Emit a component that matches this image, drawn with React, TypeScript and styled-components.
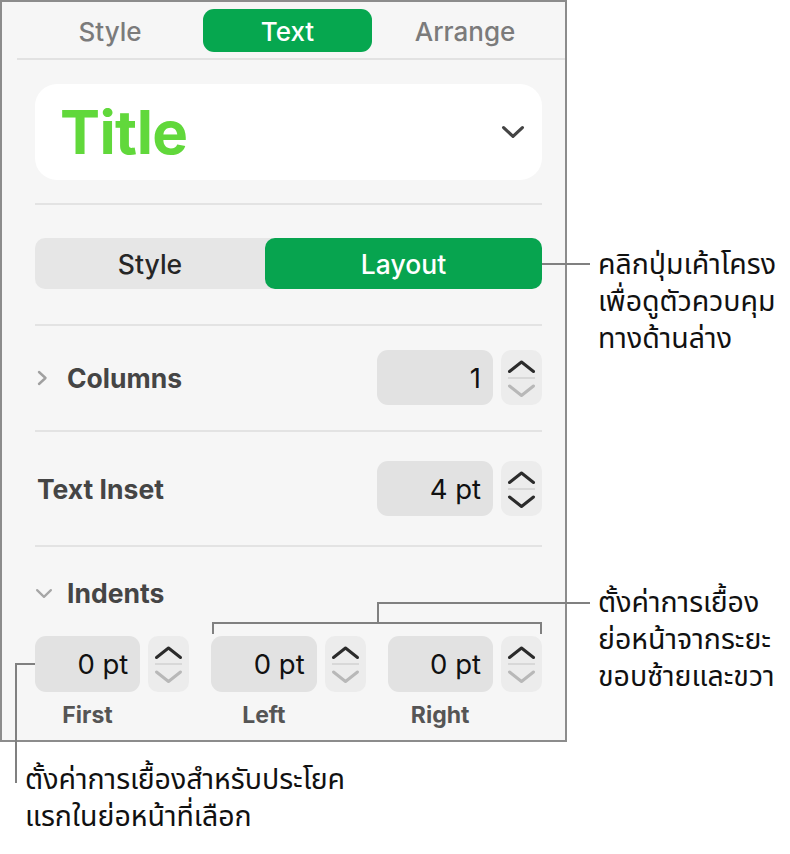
import React from "react";
import styled, { createGlobalStyle } from "styled-components";

const Global = createGlobalStyle`
  html, body { margin: 0; padding: 0; background: #ffffff; }
  body { font-family: Inter, "Noto Sans", "Noto Sans Thai", sans-serif; color: #1d1d1d; }
  * { box-sizing: border-box; }
`;

const Page = styled.div`
  position: relative;
  width: 790px;
  height: 854px;
  background: #ffffff;
`;

const Panel = styled.div`
  width: 567px;
  background: #f6f6f6;
  border: 2px solid #8c8c8c;
  padding-bottom: 13px;
`;

const TabBar = styled.div`
  display: flex;
  gap: 8.5px;
  margin-left: 15px;
  padding: 7px 0 6px 8.5px;
  border-bottom: 2px solid #e2e2e2;
`;

const Tab = styled.div<{ $active?: boolean }>`
  width: 169px;
  height: 43px;
  border-radius: 11px;
  display: flex;
  align-items: center;
  justify-content: center;
  padding-top: 2px;
  font-size: 26px;
  font-weight: 500;
  color: ${(p) => (p.$active ? "#ffffff" : "#7b7b7b")};
  background: ${(p) => (p.$active ? "#06a74f" : "transparent")};
`;

const Content = styled.div`
  padding: 0 23px 0 33px;
`;

const TitleBox = styled.div`
  margin-top: 24px;
  height: 96px;
  border-radius: 22px;
  background: #ffffff;
  display: flex;
  align-items: center;
  justify-content: space-between;
  padding: 0 17px 0 25px;
`;

const TitleText = styled.span`
  font-size: 60px;
  font-weight: 700;
  color: #61d83b;
  letter-spacing: -0.6px;
  line-height: 1;
`;

const Divider = styled.div<{ $mt: number }>`
  height: 2px;
  background: #e3e3e3;
  margin-top: ${(p) => p.$mt}px;
`;

const Segmented = styled.div`
  margin-top: 33px;
  height: 51px;
  display: grid;
  grid-template-columns: 230px 1fr;
  background: #e6e6e6;
  border-radius: 10px;
`;

const Segment = styled.div<{ $active?: boolean }>`
  display: flex;
  align-items: center;
  justify-content: center;
  font-size: 26.5px;
  font-weight: 500;
  border-radius: 10px;
  color: ${(p) => (p.$active ? "#ffffff" : "#262626")};
  background: ${(p) => (p.$active ? "#07a44f" : "transparent")};
`;

const Row = styled.div<{ $mt: number }>`
  margin-top: ${(p) => p.$mt}px;
  height: 55px;
  display: flex;
  align-items: center;
  justify-content: space-between;
`;

const RowLabel = styled.div<{ $indent?: number }>`
  display: flex;
  align-items: center;
  padding-left: ${(p) => p.$indent ?? 0}px;
  font-size: 26.5px;
  font-weight: 700;
  color: #454545;
`;

const Disclosure = styled.span<{ $pad?: number }>`
  width: 32px;
  display: flex;
  align-items: center;
  padding-left: ${(p) => p.$pad ?? 0}px;
`;

const Control = styled.div`
  display: flex;
  gap: 8px;
  height: 100%;
`;

const Field = styled.div<{ $w?: number }>`
  width: ${(p) => (p.$w ? `${p.$w}px` : "auto")};
  flex: ${(p) => (p.$w ? "none" : "1")};
  height: 100%;
  border-radius: 11px;
  background: #e2e2e2;
  display: flex;
  align-items: center;
  justify-content: flex-end;
  padding-right: 12px;
  font-size: 27.5px;
  color: #111111;
`;

const StepperBox = styled.div`
  width: 41px;
  height: 100%;
  border-radius: 10px;
  background: #ececec;
  flex: none;
  display: flex;
  flex-direction: column;
  align-items: center;
`;

const IndentsHeader = styled.div`
  margin-top: 31px;
  height: 30px;
  display: flex;
  align-items: center;
  font-size: 26.5px;
  font-weight: 700;
  color: #454545;
`;

const IndentGrid = styled.div`
  margin-top: 28px;
  display: grid;
  grid-template-columns: repeat(3, 1fr);
  column-gap: 22px;
`;

const IndentGroup = styled.div`
  display: flex;
  flex-direction: column;
`;

const IndentControl = styled.div`
  display: flex;
  gap: 8px;
  height: 56px;
`;

const IndentLabel = styled.div`
  margin-top: 11px;
  width: 105px;
  text-align: center;
  line-height: 24px;
  font-size: 23px;
  font-weight: 700;
  color: #555555;
`;

const Leaders = styled.svg`
  position: absolute;
  left: 0;
  top: 0;
  pointer-events: none;
`;

const Callout = styled.div<{ $x: number; $y: number }>`
  position: absolute;
  left: ${(p) => p.$x}px;
  top: ${(p) => p.$y}px;
  font-size: 28.5px;
  line-height: 37px;
  color: #111111;
  white-space: nowrap;
`;

function Stepper({ downDisabled = true }: { downDisabled?: boolean }) {
  return (
    <StepperBox>
      <svg width="41" height="55" viewBox="0 0 41 55">
        <path d="M8.5 21.5 L20.5 12 L32.5 21.5" fill="none" stroke="#2b2b2b" strokeWidth="3" strokeLinecap="round" strokeLinejoin="round" />
        <line x1="7" y1="28" x2="34" y2="28" stroke="#d2d2d2" strokeWidth="1.5" />
        <path d="M8.5 36 L20.5 45.5 L32.5 36" fill="none" stroke={downDisabled ? "#b8b8b8" : "#2b2b2b"} strokeWidth="3" strokeLinecap="round" strokeLinejoin="round" />
      </svg>
    </StepperBox>
  );
}

const ChevronDown = ({ w, h, color, sw }: { w: number; h: number; color: string; sw: number }) => (
  <svg width={w} height={h} viewBox={`0 0 ${w} ${h}`}>
    <path d={`M${sw / 2 + 1} ${sw / 2 + 1} L${w / 2} ${h - sw / 2 - 1} L${w - sw / 2 - 1} ${sw / 2 + 1}`} fill="none" stroke={color} strokeWidth={sw} strokeLinecap="round" strokeLinejoin="round" />
  </svg>
);

const ChevronRight = () => (
  <svg width="12" height="16" viewBox="0 0 12 16">
    <path d="M3 2 L9.5 8 L3 14" fill="none" stroke="#a0a0a0" strokeWidth="2.4" strokeLinecap="round" strokeLinejoin="round" />
  </svg>
);

export default function App() {
  return (
    <Page>
      <Global />
      <Panel>
        <TabBar>
          <Tab>Style</Tab>
          <Tab $active>Text</Tab>
          <Tab>Arrange</Tab>
        </TabBar>
        <Content>
          <TitleBox>
            <TitleText>Title</TitleText>
            <ChevronDown w={24} h={14} color="#444444" sw={3.2} />
          </TitleBox>
          <Divider $mt={23} />
          <Segmented>
            <Segment>Style</Segment>
            <Segment $active>Layout</Segment>
          </Segmented>
          <Divider $mt={35} />
          <Row $mt={24}>
            <RowLabel>
              <Disclosure $pad={1}>
                <ChevronRight />
              </Disclosure>
              Columns
            </RowLabel>
            <Control>
              <Field $w={116}>1</Field>
              <Stepper />
            </Control>
          </Row>
          <Divider $mt={25} />
          <Row $mt={29}>
            <RowLabel $indent={2}>Text Inset</RowLabel>
            <Control>
              <Field $w={116}>4 pt</Field>
              <Stepper downDisabled={false} />
            </Control>
          </Row>
          <Divider $mt={29} />
          <IndentsHeader>
            <Disclosure>
              <ChevronDown w={18} h={11} color="#a6a6a6" sw={2.2} />
            </Disclosure>
            Indents
          </IndentsHeader>
          <IndentGrid>
            {["First", "Left", "Right"].map((l) => (
              <IndentGroup key={l}>
                <IndentControl>
                  <Field>0 pt</Field>
                  <Stepper />
                </IndentControl>
                <IndentLabel>{l}</IndentLabel>
              </IndentGroup>
            ))}
          </IndentGrid>
        </Content>
      </Panel>

      <Leaders width="790" height="854" viewBox="0 0 790 854">
        <g fill="none" stroke="#808080" strokeWidth="2">
          <path d="M542 264 H590" />
          <path d="M213 634 V623 H541 V634" />
          <path d="M378 623 V603 H590" />
          <path d="M35 664 H16 V783" />
        </g>
      </Leaders>

      <Callout $x={598} $y={245}>
        คลิกปุ่มเค้าโครง
        <br />
        เพื่อดูตัวควบคุม
        <br />
        ทางด้านล่าง
      </Callout>
      <Callout $x={598} $y={583}>
        ตั้งค่าการเยื้อง
        <br />
        ย่อหน้าจากระยะ
        <br />
        ขอบซ้ายและขวา
      </Callout>
      <Callout $x={25} $y={760}>
        ตั้งค่าการเยื้องสำหรับประโยค
        <br />
        แรกในย่อหน้าที่เลือก
      </Callout>
    </Page>
  );
}
